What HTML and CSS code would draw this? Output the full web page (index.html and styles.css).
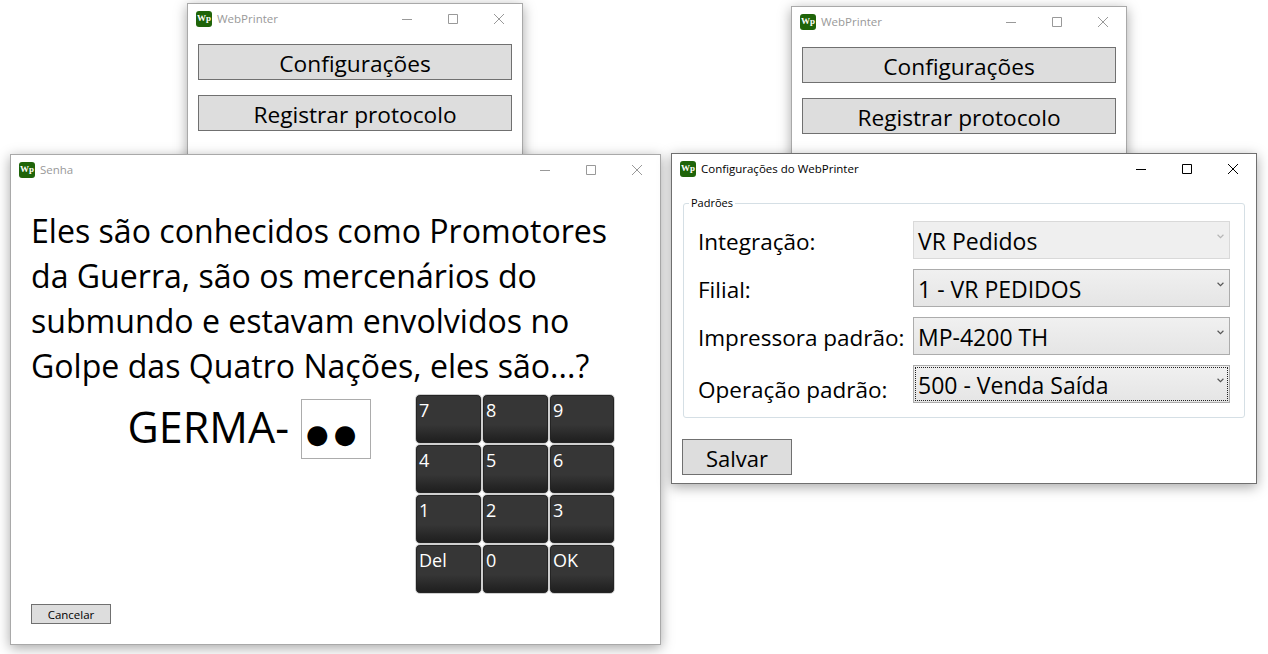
FILE: index.html
```html
<!DOCTYPE html>
<html lang="en">
<head>
  <meta charset="UTF-8" />
  <title>WebPrinter</title>
  <link rel="stylesheet" href="styles.css">
</head>
<body>
  <svg class="defs" width="0" height="0">
    <symbol id="icoMin" viewBox="0 0 10 10"><path d="M0 5.5h10" /></symbol>
    <symbol id="icoMax" viewBox="0 0 10 10"><path d="M.5.5h9v9h-9z" /></symbol>
    <symbol id="icoClose" viewBox="0 0 10 10"><path d="M0 0l10 10M10 0L0 10" /></symbol>
  </svg>

  <!-- Main window, left copy -->
  <div class="window win-main-a inactive">
    <div class="titlebar">
      <span class="app-icon">Wp</span>
      <span class="title">WebPrinter</span>
      <span class="controls">
        <span class="ctl"><svg><use href="#icoMin" /></svg></span>
        <span class="ctl"><svg><use href="#icoMax" /></svg></span>
        <span class="ctl"><svg><use href="#icoClose" /></svg></span>
      </span>
    </div>
    <div class="main-body">
      <button class="btn btn-big">Configurações</button>
      <button class="btn btn-big">Registrar protocolo</button>
    </div>
  </div>

  <!-- Main window, right copy -->
  <div class="window win-main-b inactive">
    <div class="titlebar">
      <span class="app-icon">Wp</span>
      <span class="title">WebPrinter</span>
      <span class="controls">
        <span class="ctl"><svg><use href="#icoMin" /></svg></span>
        <span class="ctl"><svg><use href="#icoMax" /></svg></span>
        <span class="ctl"><svg><use href="#icoClose" /></svg></span>
      </span>
    </div>
    <div class="main-body">
      <button class="btn btn-big">Configurações</button>
      <button class="btn btn-big">Registrar protocolo</button>
    </div>
  </div>

  <!-- Senha -->
  <div class="window win-senha inactive">
    <div class="titlebar">
      <span class="app-icon">Wp</span>
      <span class="title">Senha</span>
      <span class="controls">
        <span class="ctl"><svg><use href="#icoMin" /></svg></span>
        <span class="ctl"><svg><use href="#icoMax" /></svg></span>
        <span class="ctl"><svg><use href="#icoClose" /></svg></span>
      </span>
    </div>
    <div class="senha-body">
      <p class="question">Eles são conhecidos como Promotores<br>da Guerra, são os mercenários do<br>submundo e estavam envolvidos no<br>Golpe das Quatro Nações, eles são...?</p>
      <div class="answer-row">
        <div class="answer">
          <span class="prefix">GERMA-</span>
          <span class="pass-box">●●</span>
        </div>
        <div class="keypad">
          <button class="key">7</button>
          <button class="key">8</button>
          <button class="key">9</button>
          <button class="key">4</button>
          <button class="key">5</button>
          <button class="key">6</button>
          <button class="key">1</button>
          <button class="key">2</button>
          <button class="key">3</button>
          <button class="key">Del</button>
          <button class="key">0</button>
          <button class="key">OK</button>
        </div>
      </div>
      <button class="btn btn-cancel">Cancelar</button>
    </div>
  </div>

  <!-- Configuracoes -->
  <div class="window win-config">
    <div class="titlebar">
      <span class="app-icon">Wp</span>
      <span class="title">Configurações do WebPrinter</span>
      <span class="controls">
        <span class="ctl"><svg><use href="#icoMin" /></svg></span>
        <span class="ctl"><svg><use href="#icoMax" /></svg></span>
        <span class="ctl"><svg><use href="#icoClose" /></svg></span>
      </span>
    </div>
    <div class="config-body">
      <fieldset class="group">
        <legend>Padrões</legend>
        <div class="form-row">
          <label>Integração:</label>
          <div class="combo disabled">VR Pedidos<svg class="chev" viewBox="0 0 6 4"><path d="M.5.5L3 3 5.5.5" /></svg></div>
        </div>
        <div class="form-row">
          <label>Filial:</label>
          <div class="combo">1 - VR PEDIDOS<svg class="chev" viewBox="0 0 6 4"><path d="M.5.5L3 3 5.5.5" /></svg></div>
        </div>
        <div class="form-row">
          <label>Impressora padrão:</label>
          <div class="combo">MP-4200 TH<svg class="chev" viewBox="0 0 6 4"><path d="M.5.5L3 3 5.5.5" /></svg></div>
        </div>
        <div class="form-row last">
          <label>Operação padrão:</label>
          <div class="combo focused">500 - Venda Saída<svg class="chev" viewBox="0 0 6 4"><path d="M.5.5L3 3 5.5.5" /></svg></div>
        </div>
      </fieldset>
      <button class="btn btn-save">Salvar</button>
    </div>
  </div>
</body>
</html>
```

FILE: styles.css
```css
* {
  box-sizing: border-box;
}
body {
  font-family: 'Open Sans', 'Noto Sans', sans-serif;
  background: #fff;
  margin: 0;
  width: 1268px;
  height: 654px;
  overflow: hidden;
  position: relative;
  color: #000;
}
.defs {
  position: absolute;
}
.window {
  position: absolute;
  background: #fff;
  border: 1px solid #6f6f6f;
  box-shadow: 0 3px 12px rgba(0, 0, 0, 0.35);
}
.window.inactive {
  border-color: #a9a9a9;
}
.win-main-a {
  left: 187px;
  top: 3px;
  width: 336px;
  height: 200px;
}
.win-main-b {
  left: 791px;
  top: 6px;
  width: 336px;
  height: 200px;
}
.win-senha {
  left: 10px;
  top: 154px;
  width: 651px;
  height: 491px;
}
.win-config {
  left: 671px;
  top: 153px;
  width: 586px;
  height: 331px;
}

/* title bar */
.titlebar {
  height: 29px;
  display: flex;
  align-items: center;
  padding-left: 8px;
  font-size: 11.5px;
}
.app-icon {
  width: 16px;
  height: 16px;
  border-radius: 3px;
  background: #1f6409;
  color: #fff;
  font: bold 9px/15px 'Liberation Serif', serif;
  text-align: center;
  margin-right: 5px;
  flex: none;
}
.title {
  flex: 1;
}
.inactive .title {
  color: #999;
}
.controls {
  display: flex;
}
.ctl {
  width: 46px;
  height: 29px;
  display: flex;
  align-items: center;
  justify-content: center;
}
.ctl svg {
  width: 10px;
  height: 10px;
  fill: none;
  stroke: #000;
  stroke-width: 1;
}
.inactive .ctl svg {
  stroke: #999;
}

/* buttons */
.btn {
  display: block;
  background: #ddd;
  border: 1px solid #707070;
  font-family: inherit;
  color: #000;
  padding: 0;
  border-radius: 0;
}
.btn-big {
  width: 314px;
  height: 36px;
  font-size: 22.7px;
  line-height: 34px;
  padding-top: 2px;
}
.main-body {
  padding: 11px 10px 0;
  display: flex;
  flex-direction: column;
  gap: 15px;
}

/* senha */
.senha-body {
  padding: 24px 20px 0;
}
.question {
  margin: 0;
  font-size: 32.1px;
  line-height: 45px;
  white-space: nowrap;
}
.answer-row {
  display: flex;
  margin-top: 6px;
}
.answer {
  width: 384px;
  height: 60px;
  margin-top: 5px;
  display: flex;
  align-items: center;
  justify-content: flex-end;
  gap: 12px;
  padding-right: 44px;
}
.prefix {
  font-size: 43px;
  margin-bottom: 6px;
}
.pass-box {
  width: 70px;
  height: 60px;
  border: 1px solid #acacac;
  font-family: 'DejaVu Sans', sans-serif;
  font-size: 26px;
  line-height: 68px;
  padding-left: 4px;
  letter-spacing: 5px;
  white-space: nowrap;
  overflow: hidden;
}
.keypad {
  display: grid;
  grid-template-columns: 67px 67px 66px;
  grid-auto-rows: 50px;
  width: 200px;
}
.key {
  background: linear-gradient(#363636 0, #363636 62%, #1d1d1d 100%);
  border: 1px solid #cfcfcf;
  border-radius: 5px;
  box-shadow: inset 0 0 0 1px #242424;
  color: #fff;
  font-family: inherit;
  font-size: 18px;
  line-height: 22px;
  text-align: left;
  padding: 4px 0 0 3px;
  display: flex;
  align-items: flex-start;
}
.btn-cancel {
  width: 80px;
  height: 20px;
  font-size: 11.5px;
  line-height: 20px;
  margin-top: 10px;
}

/* configuracoes */
.config-body {
  padding: 13px 10px 0;
}
.group {
  margin: 0 0 0 1px;
  padding: 11px 14px 0 14px;
  width: 562px;
  height: 222px;
  border: 1px solid #d5dfe5;
  border-radius: 3px;
}
.group legend {
  font-size: 11px;
  line-height: 14px;
  padding: 0 2px;
  margin-left: -9px;
}
.form-row {
  display: flex;
  height: 38px;
  margin-bottom: 10px;
  align-items: center;
}
.form-row label {
  width: 215px;
  font-size: 22.5px;
  flex: none;
  padding-top: 2px;
}
.form-row.last label {
  padding-top: 10px;
}
.combo {
  width: 317px;
  height: 38px;
  border: 1px solid #acacac;
  background: linear-gradient(#f0f0f0, #e5e5e5);
  font-size: 23px;
  line-height: 39px;
  padding-left: 4px;
  position: relative;
}
.combo.disabled {
  background: #efefef;
  border-color: #d9d9d9;
}
.combo.focused::before {
  content: "";
  position: absolute;
  inset: 1px;
  border: 1px dotted #222;
}
.chev {
  position: absolute;
  right: 5px;
  top: 12px;
  width: 7px;
  height: 5px;
  fill: none;
  stroke: #555;
  stroke-width: 1;
}
.combo.disabled .chev {
  stroke: #b5b5b5;
}
.btn-save {
  width: 110px;
  height: 36px;
  font-size: 22px;
  line-height: 36px;
  margin-top: 21px;
}
```
